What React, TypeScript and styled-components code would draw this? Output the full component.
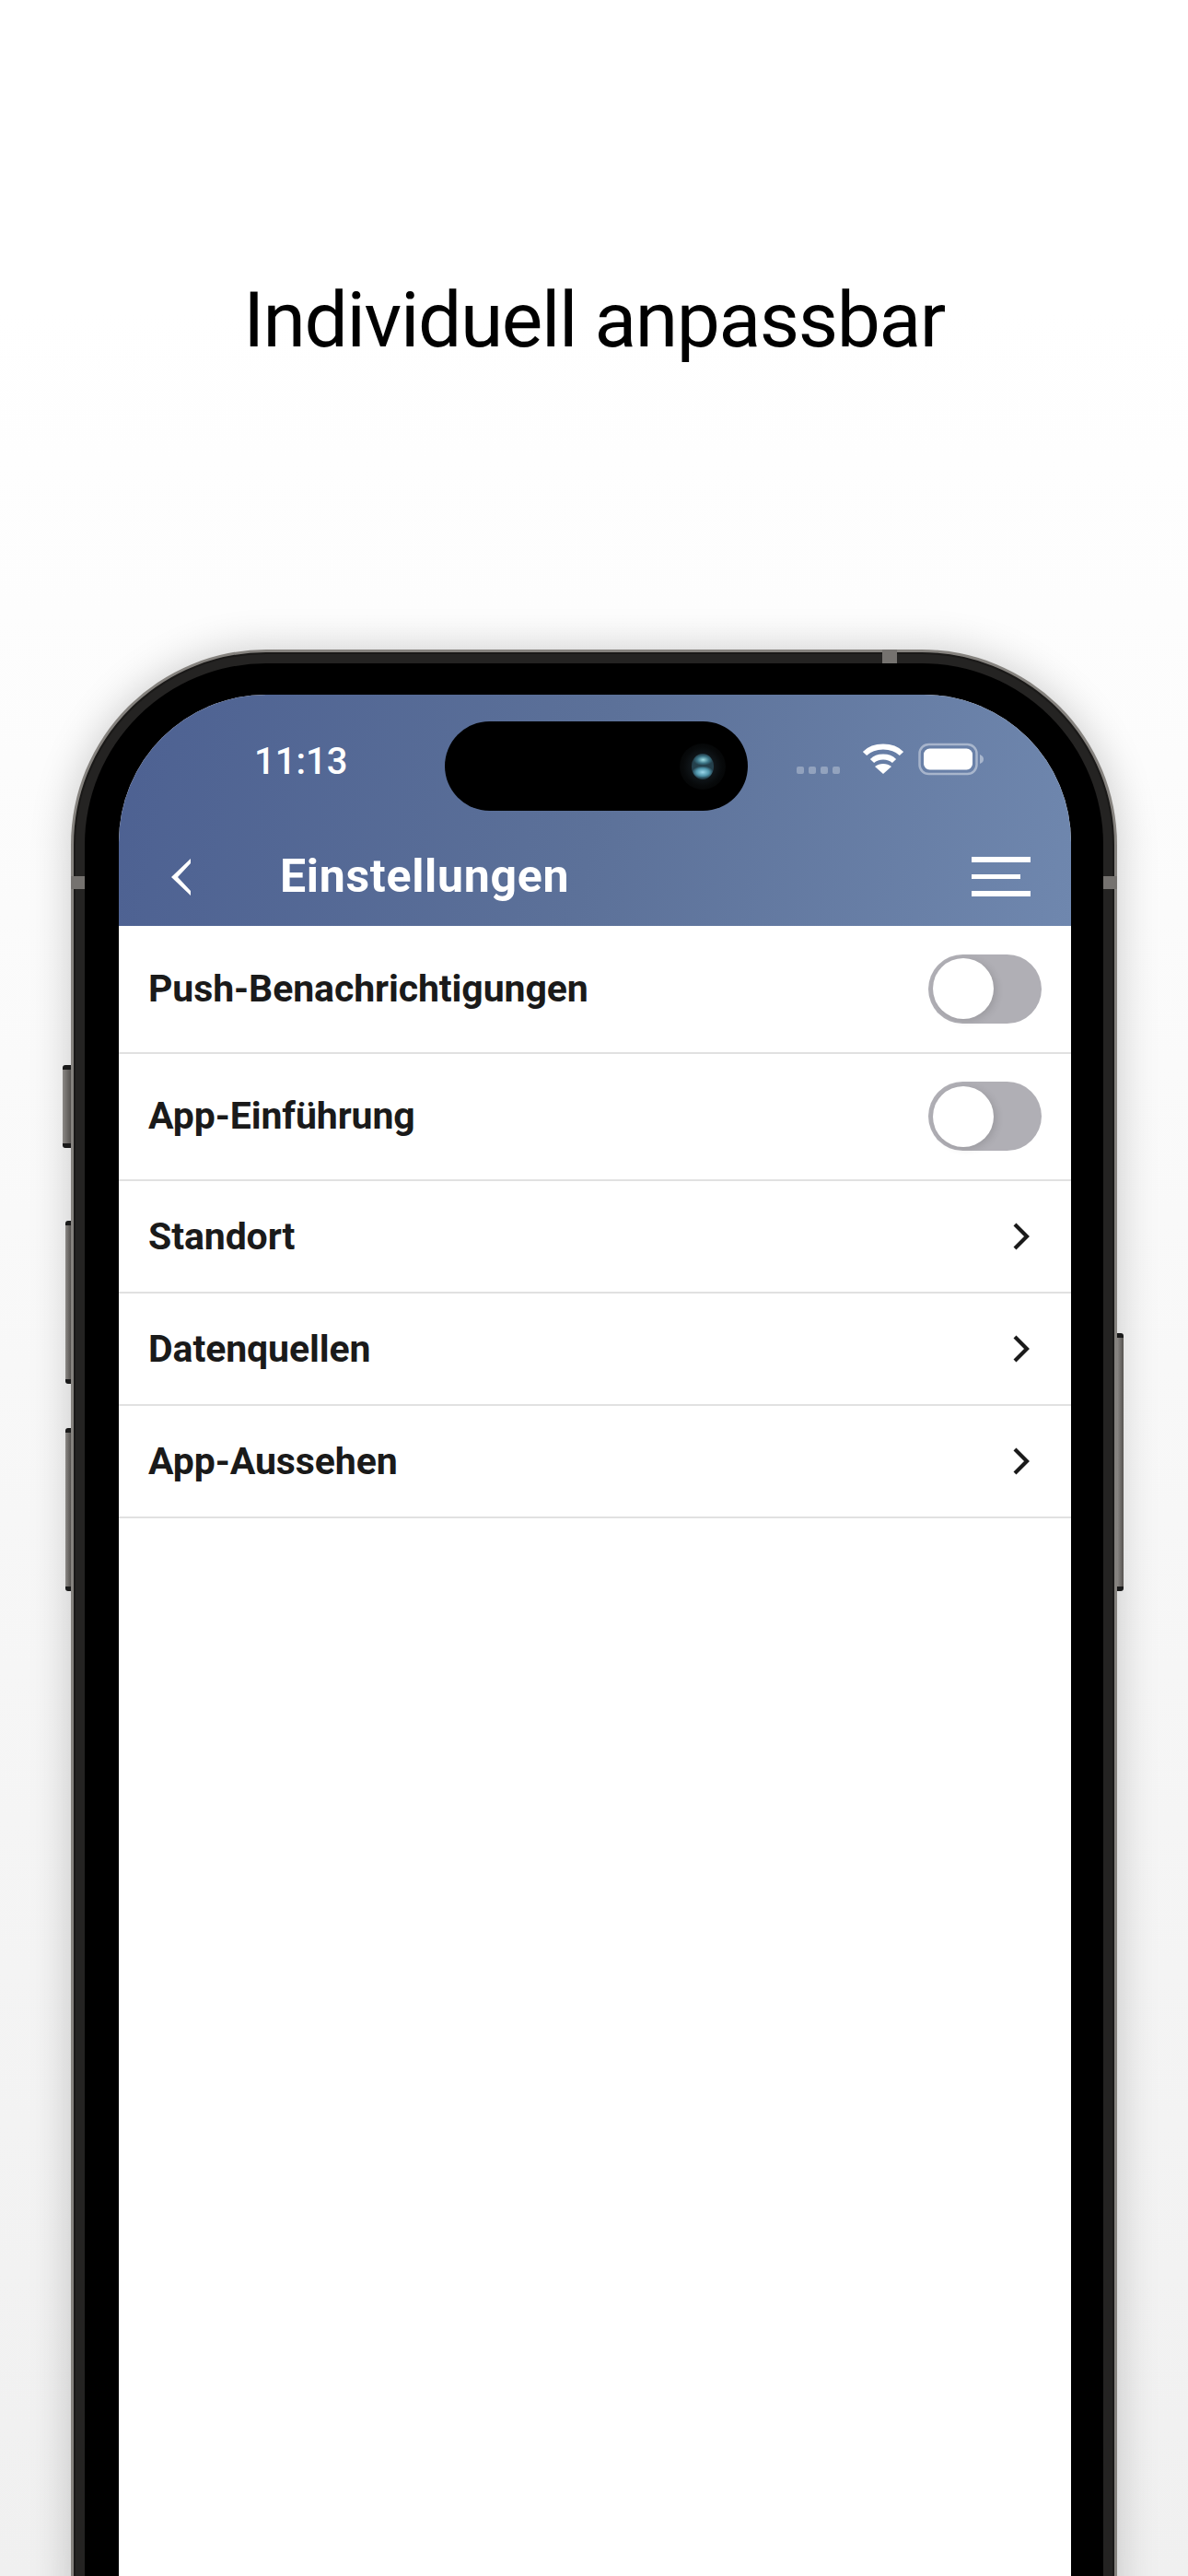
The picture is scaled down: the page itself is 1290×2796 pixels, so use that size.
import React from "react";
import styled, { createGlobalStyle } from "styled-components";

const Global = createGlobalStyle`
  html, body { margin: 0; padding: 0; background: #fff; }
  #root { width: 1290px; height: 2796px; overflow: hidden; }
`;

const Page = styled.div`
  position: relative;
  width: 1290px;
  height: 2796px;
  overflow: hidden;
  background: linear-gradient(180deg, #ffffff 0%, #ffffff 12%, #f0f0f0 100%);
  display: flex;
  flex-direction: column;
  align-items: center;
`;

const Headline = styled.h1`
  margin: 0;
  padding-top: 298px;
  height: 705px;
  box-sizing: border-box;
  font: 400 84px/100px Roboto, sans-serif;
  letter-spacing: -1.4px;
  color: #000;
  text-align: center;
  flex: none;
`;

const Phone = styled.div`
  position: relative;
  flex: none;
  width: 1136px;
  height: 2300px;
  box-sizing: border-box;
  padding: 3px;
  border-radius: 212px;
  background: #85827e;
  box-shadow: 0 0 46px rgba(0, 0, 0, 0.2);
`;

const Rim = styled.div`
  height: 100%;
  box-sizing: border-box;
  padding: 10px;
  border-radius: 209px;
  background: #242322;
  border: 2px solid #1a1918;
`;

const Bezel = styled.div`
  position: relative;
  height: 100%;
  box-sizing: border-box;
  padding: 34px 35px 0 37px;
  border-radius: 197px;
  background: #000;
`;

const Screen = styled.div`
  height: 100%;
  border-radius: 160px 160px 0 0;
  overflow: hidden;
  background: #fff;
`;

const Header = styled.header`
  height: 251px;
  box-sizing: border-box;
  background: linear-gradient(100deg, #4d6192 0%, #5c7199 50%, #6f87ae 100%);
  display: flex;
  flex-direction: column;
`;

const StatusBar = styled.div`
  height: 146px;
  display: flex;
  align-items: flex-start;
  padding: 49px 0 0 147px;
  box-sizing: border-box;
`;

const Clock = styled.span`
  font: 500 40px/48px Roboto, sans-serif;
  color: #fff;
`;

const StatusIcons = styled.div`
  margin-left: auto;
  display: flex;
  align-items: flex-start;
  margin-right: 94px;
  gap: 15px;
`;

const Dots = styled.div`
  display: flex;
  gap: 5px;
  margin: 29px 9px 0 0;
`;

const Dot = styled.i`
  width: 8px;
  height: 8px;
  border-radius: 2px;
  background: rgba(255, 255, 255, 0.3);
`;

const Glyph = styled.svg<{ $top: number }>`
  margin-top: ${(p) => p.$top}px;
  flex: none;
`;

const Island = styled.div`
  position: absolute;
  left: 391px;
  top: 63px;
  width: 329px;
  height: 97px;
  border-radius: 49px;
  background: #000;
`;

const Camera = styled.div`
  position: absolute;
  right: 24px;
  top: 24px;
  width: 50px;
  height: 50px;
  border-radius: 50%;
  background: radial-gradient(circle, #10161a 35%, #07090a 60%, #000 100%);
  display: flex;
  align-items: center;
  justify-content: center;
`;

const Lens = styled.div`
  width: 24px;
  height: 28px;
  border-radius: 50%;
  background:
    radial-gradient(ellipse 48% 24% at 50% 72%, #9ad6ea 0%, rgba(90, 170, 195, 0.8) 60%, transparent 100%),
    radial-gradient(ellipse 44% 22% at 52% 24%, #9fdde4 0%, rgba(70, 140, 160, 0.7) 60%, transparent 100%),
    #24404c;
`;

const NavBar = styled.nav`
  flex: 1;
  display: flex;
  align-items: flex-start;
  padding: 19px 44px 0 55px;
`;

const NavTitle = styled.h2`
  margin: 0 0 0 96px;
  font: 700 50px/64px Roboto, sans-serif;
  letter-spacing: 0.7px;
  color: #fff;
`;

const Back = styled.svg`
  margin-top: 12px;
  width: 24px;
  height: 42px;
  flex: none;
`;

const Burger = styled.div`
  margin-left: auto;
  margin-top: 11px;
  width: 64px;
  display: flex;
  flex-direction: column;
  gap: 13px;
`;

const BurgerLine = styled.i<{ $short?: boolean }>`
  display: block;
  height: 5.5px;
  background: #fff;
  width: ${(p) => (p.$short ? "53px" : "64px")};
`;

const Row = styled.div<{ $tall?: boolean }>`
  height: ${(p) => (p.$tall ? "136.5px" : "120px")};
  border-bottom: 2px solid #e1e1e1;
  display: flex;
  align-items: center;
  padding: 0 32px;
`;

const Label = styled.span<{ $tall?: boolean }>`
  font: 700 41px/50px Roboto, sans-serif;
  letter-spacing: -0.1px;
  color: #1a1a1a;
  margin-top: ${(p) => (p.$tall ? "-1px" : "0")};
`;

const Toggle = styled.div`
  margin-left: auto;
  width: 123px;
  height: 75px;
  border-radius: 38px;
  background: #b0afb5;
  display: flex;
  align-items: center;
  padding-left: 5px;
  box-sizing: border-box;
`;

const Knob = styled.div`
  width: 66px;
  height: 66px;
  border-radius: 50%;
  background: #fff;
  box-shadow: 3px 2px 8px rgba(0, 0, 0, 0.12);
`;

const Chevron = styled.svg`
  margin-left: auto;
  margin-right: 12px;
  width: 20px;
  height: 34px;
  flex: none;
`;

const SideButton = styled.div<{ $side: "left" | "right"; $top: number; $h: number; $w: number }>`
  position: absolute;
  ${(p) => p.$side}: -${(p) => p.$w}px;
  top: ${(p) => p.$top}px;
  height: ${(p) => p.$h}px;
  width: ${(p) => p.$w}px;
  box-sizing: border-box;
  background: linear-gradient(90deg, #8b8885, #55524f);
  border-top: 5px solid #1a1a1a;
  border-bottom: 5px solid #1a1a1a;
  border-radius: ${(p) => (p.$side === "left" ? "3px 0 0 3px" : "0 3px 3px 0")};
`;

const Antenna = styled.div<{ $pos: "top" | "left" | "right" }>`
  position: absolute;
  background: #75726f;
  ${(p) =>
    p.$pos === "top"
      ? "left: 881px; top: 0; width: 16px; height: 15px;"
      : `${p.$pos}: 0; top: 246px; width: 15px; height: 14px;`}
`;

const rows = ["Standort", "Datenquellen", "App-Aussehen"];

export default function App() {
  return (
    <Page>
      <Global />
      <Headline>Individuell anpassbar</Headline>
      <Phone>
        <SideButton $side="left" $top={451} $h={90} $w={9} />
        <SideButton $side="left" $top={620} $h={177} $w={6} />
        <SideButton $side="left" $top={845} $h={177} $w={6} />
        <SideButton $side="right" $top={742} $h={280} $w={7} />
        <Rim>
          <Bezel>
            <Screen>
              <Header>
                <StatusBar>
                  <Clock>11:13</Clock>
                  <StatusIcons>
                    <Dots>
                      <Dot />
                      <Dot />
                      <Dot />
                      <Dot />
                    </Dots>
                    <Glyph $top={2} width="46" height="36" viewBox="0 0 46 36">
                      <g fill="none" stroke="#fff" strokeWidth="6">
                        <path d="M3 13 C13 3 33 3 43 13" />
                        <path d="M11 21 C17 15 29 15 35 21" />
                      </g>
                      <path d="M23 35 L14 27 C19 23 27 23 32 27 Z" fill="#fff" />
                    </Glyph>
                    <Glyph $top={3} width="72" height="36" viewBox="0 0 72 36">
                      <rect x="1.5" y="2" width="62" height="32" rx="10" fill="none" stroke="rgba(255,255,255,0.42)" strokeWidth="2.5" />
                      <rect x="6" y="6.5" width="53" height="23" rx="6.5" fill="#fff" />
                      <path d="M67 13 C70 14 71 16 71 18 C71 20 70 22 67 23 Z" fill="rgba(255,255,255,0.42)" />
                    </Glyph>
                  </StatusIcons>
                </StatusBar>
                <NavBar>
                  <Back viewBox="0 0 24 42">
                    <path d="M23 1 L2 21 L23 41 L23 36 L9 21 L23 6 Z" fill="#fff" />
                  </Back>
                  <NavTitle>Einstellungen</NavTitle>
                  <Burger>
                    <BurgerLine />
                    <BurgerLine $short />
                    <BurgerLine />
                  </Burger>
                </NavBar>
              </Header>
              <Row $tall>
                <Label $tall>Push-Benachrichtigungen</Label>
                <Toggle>
                  <Knob />
                </Toggle>
              </Row>
              <Row $tall>
                <Label $tall>App-Einführung</Label>
                <Toggle>
                  <Knob />
                </Toggle>
              </Row>
              {rows.map((r) => (
                <Row key={r}>
                  <Label>{r}</Label>
                  <Chevron viewBox="0 0 20 34">
                    <path d="M3 4 L16 17 L3 30" fill="none" stroke="#1a1a1a" strokeWidth="4.2" />
                  </Chevron>
                </Row>
              ))}
            </Screen>
            <Island>
              <Camera>
                <Lens />
              </Camera>
            </Island>
          </Bezel>
        </Rim>
        <Antenna $pos="top" />
        <Antenna $pos="left" />
        <Antenna $pos="right" />
      </Phone>
    </Page>
  );
}
